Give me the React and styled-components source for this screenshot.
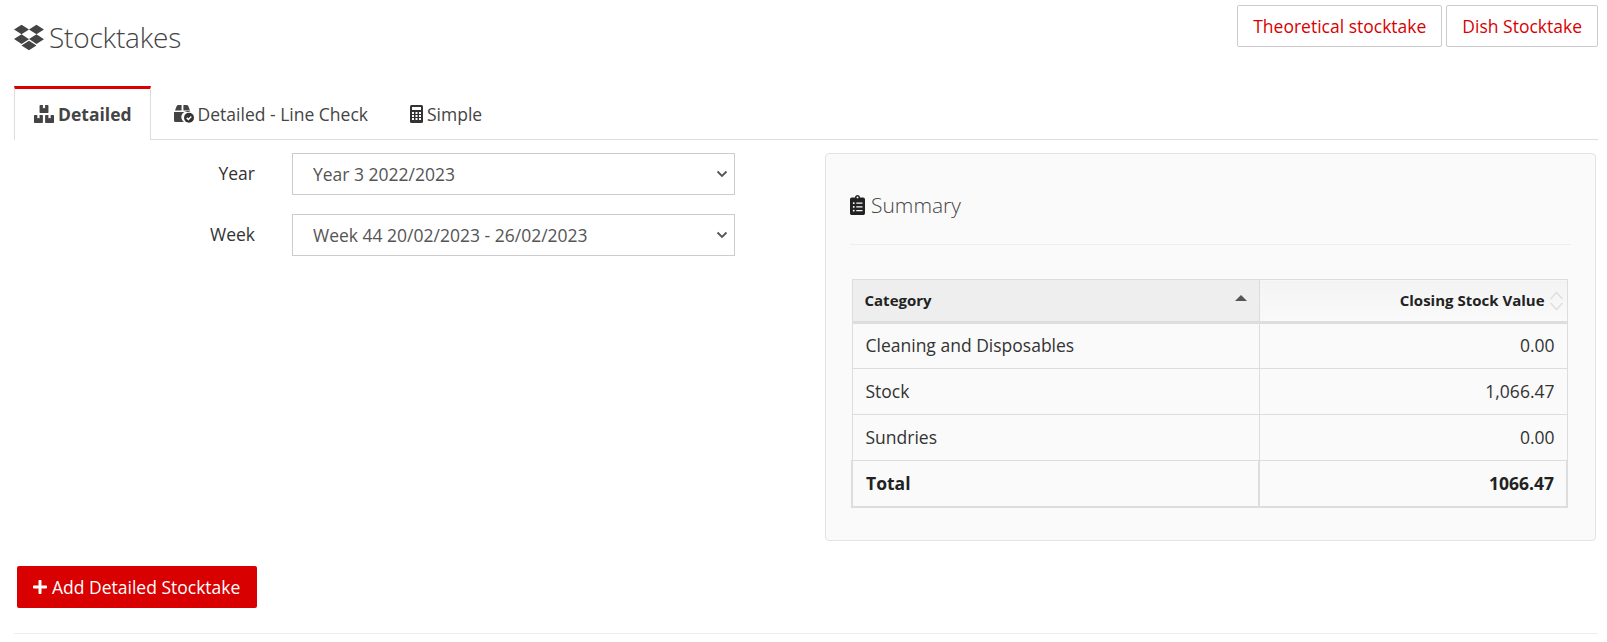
import React from "react";
import styled, { createGlobalStyle } from "styled-components";
import { FaBoxes, FaClipboardList, FaDropbox, FaPlus } from "react-icons/fa";

const GlobalStyle = createGlobalStyle`
  html, body {
    margin: 0;
    padding: 0;
    background: #fff;
    font-family: "Open Sans", "Liberation Sans", sans-serif;
    font-size: 17.5px;
    color: #333;
  }
  * { box-sizing: border-box; }
`;

const Page = styled.div`
  width: 1607px;
  height: 642px;
  padding: 0 9px 0 14px;
  overflow: hidden;
`;

const Header = styled.div`
  display: flex;
  justify-content: space-between;
  align-items: flex-start;
  height: 86px;
`;

const Title = styled.h1`
  display: flex;
  align-items: center;
  gap: 4px;
  margin: 20px 0 0;
  font-size: 28px;
  line-height: 34px;
  font-weight: 300;
  color: #444;
  letter-spacing: -0.2px;
  svg { width: 32px; height: 29px; color: #444; margin-left: -1px; }
`;

const HeaderActions = styled.div`
  display: flex;
  gap: 4px;
  padding-top: 5px;
`;

const OutlineButton = styled.button`
  height: 42px;
  padding: 0 15px;
  background: #fff;
  border: 1px solid #ccc;
  border-radius: 2px;
  color: #d80000;
  font: 400 17.5px "Open Sans", sans-serif;
`;

const Tabs = styled.div`
  display: flex;
  align-items: flex-start;
  height: 54px;
  border-bottom: 1px solid #ddd;
`;

const Tab = styled.div`
  display: flex;
  align-items: center;
  gap: 4px;
  height: ${(p) => (p.$active ? "54px" : "53px")};
  margin-right: ${(p) => (p.$active ? "2px" : "0")};
  padding: ${(p) => (p.$active ? "0 18px 1px 19px" : "0 20px")};
  font-size: 17.5px;
  font-weight: ${(p) => (p.$active ? 700 : 400)};
  color: #444;
  background: #fff;
  border-top: ${(p) => (p.$active ? "3px solid #d80000" : "3px solid transparent")};
  border-left: 1px solid ${(p) => (p.$active ? "#ddd" : "transparent")};
  border-right: 1px solid ${(p) => (p.$active ? "#ddd" : "transparent")};
  svg { flex: none; color: #444; }
`;

const Content = styled.div`
  display: grid;
  grid-template-columns: 721px 771px;
  justify-content: space-between;
  margin-top: 13px;
  padding-right: 2px;
`;

const FilterForm = styled.div`
  display: flex;
  flex-direction: column;
  gap: 19px;
`;

const FormRow = styled.div`
  display: grid;
  grid-template-columns: 241px 443px;
  column-gap: 37px;
  align-items: center;
`;

const FormLabel = styled.label`
  text-align: right;
  font-size: 17.5px;
  color: #333;
  padding-bottom: 2px;
`;

const Select = styled.select`
  width: 443px;
  height: 42px;
  padding: 0 20px;
  appearance: none;
  background: #fff url("data:image/svg+xml,%3Csvg xmlns='http://www.w3.org/2000/svg' width='12' height='8' viewBox='0 0 12 8'%3E%3Cpath d='M1.5 1.5 6 6l4.5-4.5' fill='none' stroke='%23555' stroke-width='1.8'/%3E%3C/svg%3E") no-repeat right 6px center;
  border: 1px solid #ccc;
  border-radius: 0;
  color: #555;
  font: 400 17.5px "Open Sans", sans-serif;
`;

const SummaryPanel = styled.section`
  height: 388px;
  padding: 34px 24px 0 24px;
  background: #fafafa;
  border: 1px solid #e3e3e3;
  border-radius: 4px;
`;

const SummaryTitle = styled.h3`
  display: flex;
  align-items: center;
  gap: 6px;
  margin: 0;
  height: 34px;
  font-size: 21px;
  font-weight: 300;
  color: #444;
  svg { width: 15px; height: 20px; color: #222; }
`;

const Divider = styled.hr`
  margin: 22px 0 34px;
  border: 0;
  border-top: 1px solid #eee;
`;

const SummaryTable = styled.table`
  width: 715px;
  margin-left: 1px;
  border-collapse: collapse;
  table-layout: fixed;
  font-size: 17.5px;
  color: #333;
`;

const HeadCell = styled.th`
  position: relative;
  height: 43px;
  padding: 0 ${(p) => (p.$right ? "22px" : "12px")} 2px 12px;
  text-align: ${(p) => (p.$right ? "right" : "left")};
  font-size: 15px;
  font-weight: 700;
  color: #222;
  border: 1px solid #ddd;
  border-bottom: 3px solid #ddd;
  background: ${(p) => (p.$right ? "linear-gradient(#f3f3f3, #fafafa)" : "#eeeeee")};
`;

const SortIcon = styled.svg`
  position: absolute;
  top: ${(p) => p.$top}px;
  right: ${(p) => p.$right}px;
`;

const Cell = styled.td`
  height: 46px;
  padding: 0 12px ${(p) => (p.$total ? "0" : "2px")} 13px;
  text-align: ${(p) => (p.$right ? "right" : "left")};
  border: 1px solid #ddd;
  font-weight: ${(p) => (p.$total ? 700 : 400)};
  color: ${(p) => (p.$total ? "#222" : "#333")};
  ${(p) => p.$total && "border-width: 1px 2px 2px 2px;"}
`;

const AddButton = styled.button`
  display: flex;
  align-items: center;
  gap: 4px;
  width: 240px;
  height: 42px;
  margin: 25px 0 0 3px;
  padding: 0 15px;
  background: #d80000;
  border: 0;
  border-radius: 2px;
  color: #fff;
  font: 400 17.5px "Open Sans", sans-serif;
  svg { width: 16px; height: 16px; }
`;

const FooterRule = styled.hr`
  margin: 25px 0 0;
  border: 0;
  border-top: 1px solid #eee;
`;

// box with a check badge, not in the icon packs
const BoxCheckIcon = () => (
  <svg width="20" height="18" viewBox="0 0 20 18">
    <path d="M1 5.500 2.600 1.200Q3 0 4.500 0H7.600V5.500zM9.400 0H12.500Q14 0 14.400 1.200L16 5.500H9.400z" fill="#444" />
    <path d="M0 7H17V7.300A6 6 0 0 0 9.800 17H1.500A1.500 1.500 0 0 1 0 15.500z" fill="#444" />
    <circle cx="15" cy="12.800" r="5" fill="#333" />
    <path d="M12.800 12.900l1.600 1.600 2.900-3" fill="none" stroke="#fff" strokeWidth="1.500" />
  </svg>
);

// narrow calculator, the fa one is too wide here
const CalculatorIcon = () => (
  <svg width="13" height="18" viewBox="0 0 13 18">
    <rect width="13" height="18" rx="1.500" fill="#333" />
    <rect x="2" y="2" width="9" height="3" fill="#fff" />
    {[7, 10, 13].map((y) =>
      [2, 5.500, 9].map((x) => <rect key={`${x}-${y}`} x={x} y={y} width="2" height="2" fill="#fff" />)
    )}
  </svg>
);

const rows = [
  ["Cleaning and Disposables", "0.00"],
  ["Stock", "1,066.47"],
  ["Sundries", "0.00"],
];

export default function App() {
  return (
    <Page>
      <GlobalStyle />
      <Header>
        <Title>
          <FaDropbox />
          Stocktakes
        </Title>
        <HeaderActions>
          <OutlineButton>Theoretical stocktake</OutlineButton>
          <OutlineButton>Dish Stocktake</OutlineButton>
        </HeaderActions>
      </Header>

      <Tabs>
        <Tab $active>
          <FaBoxes size={20} />
          Detailed
        </Tab>
        <Tab>
          <BoxCheckIcon />
          Detailed - Line Check
        </Tab>
        <Tab>
          <CalculatorIcon />
          Simple
        </Tab>
      </Tabs>

      <Content>
        <FilterForm>
          <FormRow>
            <FormLabel>Year</FormLabel>
            <Select defaultValue="y3">
              <option value="y3">Year 3 2022/2023</option>
            </Select>
          </FormRow>
          <FormRow>
            <FormLabel>Week</FormLabel>
            <Select defaultValue="w44">
              <option value="w44">Week 44 20/02/2023 - 26/02/2023</option>
            </Select>
          </FormRow>
        </FilterForm>

        <SummaryPanel>
          <SummaryTitle>
            <FaClipboardList />
            Summary
          </SummaryTitle>
          <Divider />
          <SummaryTable>
            <colgroup>
              <col width="407" />
              <col width="308" />
            </colgroup>
            <thead>
              <tr>
                <HeadCell>
                  Category
                  <SortIcon $top={14} $right={11} width="14" height="8" viewBox="0 0 14 8">
                    <path d="M7 1l6 6H1z" fill="#555" />
                  </SortIcon>
                </HeadCell>
                <HeadCell $right>
                  Closing Stock Value
                  <SortIcon $top={10} $right={3} width="15" height="22" viewBox="0 0 15 22">
                    <path d="M1.500 9L7.500 2.500 13.500 9M1.500 13L7.500 19.500 13.500 13" fill="none" stroke="#ddd" strokeWidth="1.300" />
                  </SortIcon>
                </HeadCell>
              </tr>
            </thead>
            <tbody>
              {rows.map(([name, value]) => (
                <tr key={name}>
                  <Cell>{name}</Cell>
                  <Cell $right>{value}</Cell>
                </tr>
              ))}
              <tr>
                <Cell $total>Total</Cell>
                <Cell $total $right>1066.47</Cell>
              </tr>
            </tbody>
          </SummaryTable>
        </SummaryPanel>
      </Content>

      <AddButton>
        <FaPlus />
        Add Detailed Stocktake
      </AddButton>
      <FooterRule />
    </Page>
  );
}
